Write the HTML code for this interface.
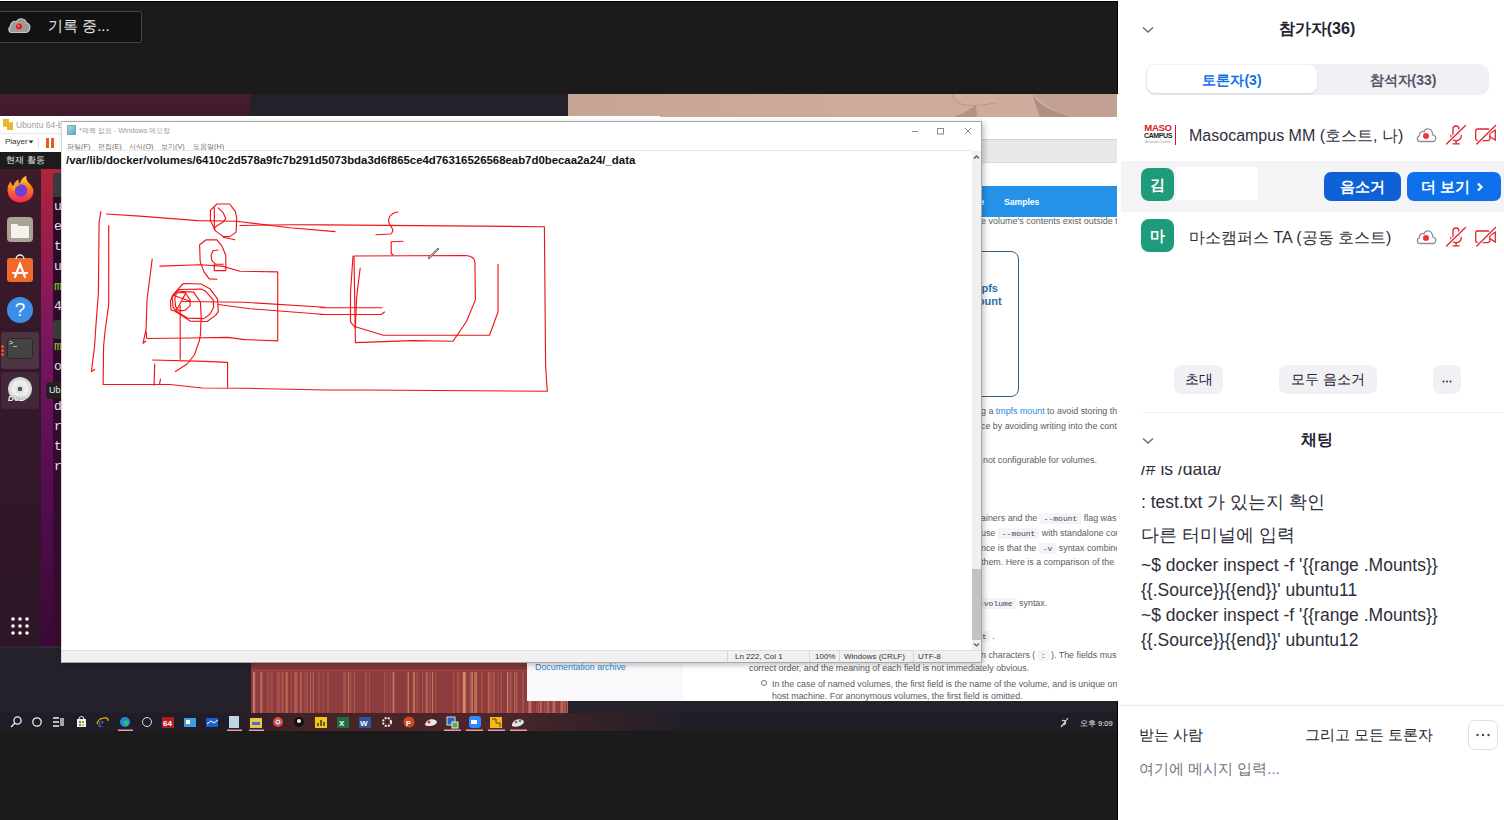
<!DOCTYPE html>
<html><head><meta charset="utf-8">
<style>
*{margin:0;padding:0;box-sizing:border-box}
html,body{width:1504px;height:820px;overflow:hidden;background:#fff;font-family:"Liberation Sans",sans-serif;position:relative}
.a{position:absolute}
#video{left:0;top:0;width:1117px;height:820px;background:#1b1b1b;overflow:hidden}
#panel{left:1118px;top:0;width:386px;height:820px;background:#fff;overflow:hidden}
</style></head><body>
<div id="video" class="a">
  <!-- ubuntu wallpaper top strip -->
  <div class="a" style="left:0;top:94px;width:250px;height:22px;background:linear-gradient(180deg,#461f30,#3f1a2c)"></div>
  <div class="a" style="left:250px;top:94px;width:318px;height:22px;background:#24212b"></div>
  <!-- face photo -->
  <svg class="a" style="left:568px;top:94px" width="549" height="23" viewBox="568 94 549 23">
    <defs><linearGradient id="fg" x1="0" x2="1"><stop offset="0" stop-color="#c7a595"/><stop offset=".5" stop-color="#cdab9b"/><stop offset="1" stop-color="#cfad9e"/></linearGradient></defs>
    <rect x="568" y="94" width="549" height="23" fill="url(#fg)"/>
    <path d="M1033,94 L1117,94 L1117,117 L1072,117 C1060,112 1045,108 1040,100 Z" fill="#c2a192"/>
    <path d="M1033,94 C1036,103 1048,110 1072,117 L1040,117 C1037,110 1034,100 1033,94 Z" fill="#af8f82"/>
    <path d="M976,104 C970,110 962,114 953,117 L977,117 Z" fill="#b39284"/>
    <path d="M953,94 C953,100 958,104 966,105 C975,106 985,105 995,103 L995,94 Z" fill="#d2ae9c"/>
    <path d="M953,94 C953,100 958,104 966,105 C975,106 985,105 995,103" fill="none" stroke="#b99787" stroke-width="1"/>
  </svg>
  <!-- navy desktop bottom -->
  <div class="a" style="left:0;top:647px;width:1117px;height:84px;background:#24212b"></div>
  <!-- curtain -->
  <svg class="a" style="left:251px;top:660px" width="317" height="53" viewBox="0 0 317 53"><rect width="317" height="53" fill="#8e3d3f"/><rect x="2.0" y="12" width="2.2" height="41" fill="#d07a66" opacity="0.87"/><rect x="9.2" y="12" width="2.2" height="41" fill="#d98a6a" opacity="0.53"/><rect x="16.4" y="12" width="1" height="41" fill="#c8705a" opacity="0.65"/><rect x="18.9" y="12" width="3" height="41" fill="#b45550" opacity="0.47"/><rect x="25.9" y="12" width="3" height="41" fill="#b45550" opacity="0.73"/><rect x="30.4" y="12" width="2.2" height="41" fill="#c8705a" opacity="0.48"/><rect x="34.6" y="12" width="2.2" height="41" fill="#c8705a" opacity="0.80"/><rect x="39.8" y="12" width="1" height="41" fill="#c06558" opacity="0.56"/><rect x="43.3" y="12" width="3" height="41" fill="#c8705a" opacity="0.66"/><rect x="48.8" y="12" width="2.2" height="41" fill="#d07a66" opacity="0.49"/><rect x="53.5" y="12" width="1" height="41" fill="#c06558" opacity="0.58"/><rect x="55.7" y="12" width="0.8" height="41" fill="#e0956e" opacity="0.50"/><rect x="59.0" y="12" width="0.8" height="41" fill="#d07a66" opacity="0.76"/><rect x="61.8" y="12" width="0.8" height="41" fill="#e0956e" opacity="0.62"/><rect x="66.6" y="12" width="2.2" height="41" fill="#b45550" opacity="0.54"/><rect x="71.3" y="12" width="1.3" height="41" fill="#b85a50" opacity="0.46"/><rect x="76.6" y="12" width="0.8" height="41" fill="#d98a6a" opacity="0.56"/><rect x="92.2" y="12" width="3" height="41" fill="#c06558" opacity="0.53"/><rect x="97.2" y="12" width="1" height="41" fill="#e0956e" opacity="0.74"/><rect x="99.4" y="12" width="1" height="41" fill="#c8705a" opacity="0.57"/><rect x="102.9" y="12" width="0.8" height="41" fill="#d98a6a" opacity="0.53"/><rect x="114.6" y="12" width="0.8" height="41" fill="#d07a66" opacity="0.72"/><rect x="117.9" y="12" width="0.8" height="41" fill="#c8705a" opacity="0.54"/><rect x="133.2" y="12" width="1" height="41" fill="#c06558" opacity="0.67"/><rect x="135.7" y="12" width="1" height="41" fill="#b45550" opacity="0.52"/><rect x="138.7" y="12" width="1" height="41" fill="#b45550" opacity="0.54"/><rect x="141.7" y="12" width="1.6" height="41" fill="#e0956e" opacity="0.72"/><rect x="156.6" y="12" width="1.3" height="41" fill="#d98a6a" opacity="0.78"/><rect x="161.9" y="12" width="2.2" height="41" fill="#e0956e" opacity="0.58"/><rect x="165.6" y="12" width="0.8" height="41" fill="#d98a6a" opacity="0.55"/><rect x="167.6" y="12" width="1" height="41" fill="#b45550" opacity="0.46"/><rect x="171.1" y="12" width="1" height="41" fill="#c8705a" opacity="0.47"/><rect x="174.6" y="12" width="2.2" height="41" fill="#d98a6a" opacity="0.49"/><rect x="178.3" y="12" width="1.3" height="41" fill="#b45550" opacity="0.78"/><rect x="181.1" y="12" width="0.8" height="41" fill="#e0956e" opacity="0.86"/><rect x="184.4" y="12" width="0.8" height="41" fill="#c06558" opacity="0.74"/><rect x="201.9" y="12" width="0.8" height="41" fill="#c8705a" opacity="0.65"/><rect x="205.7" y="12" width="3" height="41" fill="#b45550" opacity="0.77"/><rect x="211.7" y="12" width="3" height="41" fill="#e0956e" opacity="0.86"/><rect x="218.7" y="12" width="0.8" height="41" fill="#d07a66" opacity="0.67"/><rect x="220.3" y="12" width="1.6" height="41" fill="#e0956e" opacity="0.71"/><rect x="223.1" y="12" width="3" height="41" fill="#c8705a" opacity="0.90"/><rect x="230.1" y="12" width="1.6" height="41" fill="#b45550" opacity="0.76"/><rect x="236.7" y="12" width="2.2" height="41" fill="#c8705a" opacity="0.68"/><rect x="239.7" y="12" width="0.8" height="41" fill="#e0956e" opacity="0.46"/><rect x="241.7" y="12" width="2.2" height="41" fill="#b45550" opacity="0.86"/><rect x="246.4" y="12" width="1.3" height="41" fill="#b85a50" opacity="0.51"/><rect x="249.7" y="12" width="1.3" height="41" fill="#b45550" opacity="0.87"/><rect x="256.0" y="12" width="1.3" height="41" fill="#e0956e" opacity="0.75"/><rect x="259.3" y="12" width="1" height="41" fill="#d98a6a" opacity="0.62"/><rect x="263.3" y="12" width="1" height="41" fill="#e0956e" opacity="0.61"/><rect x="265.1" y="12" width="1.3" height="41" fill="#d07a66" opacity="0.53"/><rect x="271.4" y="12" width="1" height="41" fill="#d07a66" opacity="0.64"/><rect x="277.4" y="12" width="3" height="41" fill="#d07a66" opacity="0.83"/><rect x="285.4" y="12" width="0.8" height="41" fill="#b85a50" opacity="0.84"/><rect x="287.0" y="12" width="1.3" height="41" fill="#c06558" opacity="0.61"/><rect x="289.1" y="12" width="1.6" height="41" fill="#e0956e" opacity="0.54"/><rect x="293.2" y="12" width="1" height="41" fill="#d07a66" opacity="0.47"/><rect x="295.4" y="12" width="3" height="41" fill="#c06558" opacity="0.74"/><rect x="301.4" y="12" width="3" height="41" fill="#d98a6a" opacity="0.54"/><rect x="309.4" y="12" width="3" height="41" fill="#c8705a" opacity="0.79"/><rect x="313.2" y="12" width="1.3" height="41" fill="#d07a66" opacity="0.61"/><rect x="316.0" y="12" width="3" height="41" fill="#d98a6a" opacity="0.49"/><rect x="0" y="0" width="317" height="12" fill="#85383a"/><rect x="0" y="10" width="317" height="1.5" fill="#a85048" opacity=".7"/></svg>
  
  <!-- docs browser -->
  <div class="a" style="left:527px;top:117px;width:590px;height:584px;background:#fff;overflow:hidden">
    <div class="a" style="left:0;top:22px;width:590px;height:24px;background:#e9e7ea;border-top:1px solid #d0cfd2;border-bottom:1px solid #dcdcdc"></div>
    <div class="a" style="left:0;top:69px;width:590px;height:31px;background:#2592e8"></div>
    <div class="a" style="left:477px;top:79px;color:#fff;font-size:8.6px;font-weight:bold;line-height:12px">Samples</div>
    <div class="a" style="left:452px;top:79px;color:#fff;font-size:9.5px;font-weight:bold;line-height:12px">e</div>
    <div class="a" style="left:0;top:500px;width:156px;height:84px;background:#f9f9fb"></div>
  </div>
  <!-- docs content visible -->
  <div class="a" style="left:981px;top:214px;color:#606060;font-size:9px;line-height:14px;white-space:nowrap">e volume's contents exist outside th</div>
  <div class="a" style="left:940px;top:251px;width:79px;height:146px;border:1.5px solid #2f5f86;border-radius:8px"></div>
  <div class="a" style="left:968px;top:282px;color:#2d6fa5;font-size:11px;font-weight:bold;line-height:13px">tmpfs<br>mount</div>
  <div class="a" style="left:981px;top:404px;color:#5c5c5c;font-size:8.9px;line-height:14px;white-space:nowrap">g a <span style="color:#2a8ad4">tmpfs mount</span> to avoid storing th</div>
  <div class="a" style="left:981px;top:419px;color:#5c5c5c;font-size:8.9px;line-height:14px;white-space:nowrap">ce by avoiding writing into the conta</div>
  <div class="a" style="left:983px;top:453px;color:#5c5c5c;font-size:8.9px;line-height:14px;white-space:nowrap">not configurable for volumes.</div>
  <div class="a" style="left:981px;top:511px;color:#5c5c5c;font-size:8.9px;line-height:14px;white-space:nowrap">ainers and the <span style="background:#f3f4f8;color:#445;font-family:'Liberation Mono',monospace;font-size:8px;padding:1px 4px">--mount</span> flag was u</div>
  <div class="a" style="left:981px;top:526px;color:#5c5c5c;font-size:8.9px;line-height:14px;white-space:nowrap">use <span style="background:#f3f4f8;color:#445;font-family:'Liberation Mono',monospace;font-size:8px;padding:1px 4px">--mount</span> with standalone cont</div>
  <div class="a" style="left:981px;top:541px;color:#5c5c5c;font-size:8.9px;line-height:14px;white-space:nowrap">nce is that the <span style="background:#f3f4f8;color:#445;font-family:'Liberation Mono',monospace;font-size:8px;padding:1px 4px">-v</span> syntax combine</div>
  <div class="a" style="left:981px;top:555px;color:#5c5c5c;font-size:8.9px;line-height:14px;white-space:nowrap">them. Here is a comparison of the s</div>
  <div class="a" style="left:975px;top:596px;color:#5c5c5c;font-size:8.9px;line-height:14px;white-space:nowrap"><span style="background:#f3f4f8;color:#445;font-family:'Liberation Mono',monospace;font-size:8px;padding:1px 4px">-volume</span> syntax.</div>
  <div class="a" style="left:979px;top:629px;color:#5c5c5c;font-size:8.9px;line-height:14px;white-space:nowrap"><span style="background:#f3f4f8;color:#445;font-family:'Liberation Mono',monospace;font-size:8px;padding:1px 3px">t</span> .</div>
  <div class="a" style="left:981px;top:648px;color:#5c5c5c;font-size:8.9px;line-height:14px;white-space:nowrap">n characters ( <span style="background:#f3f4f8;color:#445;font-family:'Liberation Mono',monospace;font-size:8px;padding:1px 3px">:</span> ). The fields must l</div>
  <div class="a" style="left:749px;top:661px;color:#5c5c5c;font-size:8.9px;line-height:14px;white-space:nowrap">correct order, and the meaning of each field is not immediately obvious.</div>
  <div class="a" style="left:761px;top:680px;width:6px;height:6px;border:1px solid #777;border-radius:50%"></div>
  <div class="a" style="left:772px;top:677px;color:#5c5c5c;font-size:8.9px;line-height:14px;white-space:nowrap">In the case of named volumes, the first field is the name of the volume, and is unique on a</div>
  <div class="a" style="left:772px;top:689px;color:#5c5c5c;font-size:8.9px;line-height:14px;white-space:nowrap">host machine. For anonymous volumes, the first field is omitted.</div>
  <div class="a" style="left:535px;top:660px;color:#2a8ad4;font-size:8.9px;line-height:14px;white-space:nowrap">Documentation archive</div>
  <!-- vmware -->
  <div class="a" style="left:0;top:116px;width:660px;height:532px;background:#fff;overflow:hidden">
    <div class="a" style="left:3px;top:3px;width:10px;height:11px;background:#e8b82a;clip-path:polygon(0 0,60% 0,60% 30%,100% 30%,100% 100%,40% 100%,40% 70%,0 70%)"></div>
    <div class="a" style="left:16px;top:3px;color:#a0a0a0;font-size:8.5px;line-height:12px">Ubuntu 64-bit</div>
    <div class="a" style="left:0;top:17px;width:660px;height:1px;background:#ececec"></div>
    <div class="a" style="left:5px;top:20px;color:#333;font-size:8px;line-height:12px">Player</div><svg class="a" style="left:28px;top:24px" width="6" height="4" viewBox="0 0 6 4"><path d="M0.5,0.5 h5 l-2.5,3 z" fill="#333"/></svg>
    <div class="a" style="left:38px;top:21px;width:1px;height:11px;background:#ddd"></div>
    <div class="a" style="left:46px;top:22px;width:3px;height:10px;background:#e85d1a"></div>
    <div class="a" style="left:51px;top:22px;width:3px;height:10px;background:#e85d1a"></div>
    <!-- ubuntu -->
    <div class="a" style="left:0;top:36px;width:660px;height:17px;background:#1d1d1d"></div>
    <div class="a" style="left:6px;top:38px;color:#e8e8e8;font-size:9px;line-height:12px">현재 활동</div>
    <div class="a" style="left:0;top:53px;width:41px;height:479px;background:linear-gradient(180deg,#3d1b2b,#341829 40%,#2d1726)"></div>
    <div class="a" style="left:41px;top:53px;width:30px;height:479px;background:linear-gradient(180deg,#b02539,#9a1d4c 15%,#7a1660 35%,#5a0e55 60%,#3a0838)"></div>
    <div class="a" style="left:53px;top:57px;width:12px;height:475px;background:linear-gradient(180deg,#2e0b27,#380c30);border-radius:4px 0 0 0"></div>
    <div class="a" style="left:53px;top:57px;width:12px;height:24px;background:#3b3b3b;border-radius:4px 0 0 0"></div>
    <!-- dock icons (coords relative to vmware: top offset 116) -->
    <!-- firefox -->
    <svg class="a" style="left:6px;top:59px" width="29" height="29" viewBox="0 0 29 29">
      <defs><linearGradient id="ffg" x1="0" y1="0" x2="0" y2="1"><stop offset="0" stop-color="#ffd43a"/><stop offset=".45" stop-color="#ff7b1f"/><stop offset="1" stop-color="#f5225a"/></linearGradient></defs>
      <path d="M14.5,27.5 C7,27.5 1.5,22 1.5,15 C1.5,11 3,8 5,6.5 C5,9 6.5,10.5 7.5,11 C8,7.5 10.5,5 13,4.5 C12,6.5 12.5,8 14,8.5 C15,4 18,1.5 20.5,1 C19.5,3.5 21,6 23,8 C26,11 27.5,13.5 27.5,16 C27.5,22.5 22,27.5 14.5,27.5 Z" fill="url(#ffg)"/>
      <circle cx="15" cy="15.5" r="6.3" fill="#6f3fd8"/>
      <path d="M5,13 C7,10 11,9 14,10.5 C10,11 8.5,13.5 9,16 C6.5,15.5 5.5,14.5 5,13 Z" fill="#ff9a2a"/>
    </svg>
    
    <!-- files -->
    <div class="a" style="left:7px;top:101px;width:26px;height:25px;border-radius:4px;background:#a9a295"></div>
    <svg class="a" style="left:7px;top:101px" width="26" height="25" viewBox="0 0 26 25"><path d="M4,7 h6 l2,2 h10 v12 h-18 z" fill="#f4f2ee"/></svg>
    <!-- software -->
    <div class="a" style="left:7px;top:142px;width:26px;height:24px;border-radius:3px;background:#ef6a2a"></div>
    <svg class="a" style="left:7px;top:138px" width="26" height="28" viewBox="0 0 26 28"><path d="M9,5 a4,4 0 0 1 8,0" stroke="#eee" stroke-width="1.3" fill="none"/><g stroke="#fff" stroke-width="2.2" fill="none" stroke-linecap="round"><path d="M8,23 L13,10 L18,23"/><path d="M6,19 h14"/></g></svg>
    <!-- help -->
    <div class="a" style="left:7px;top:181px;width:26px;height:26px;border-radius:50%;background:#3a8ee6;color:#fff;font-size:19px;text-align:center;line-height:26px">?</div>
    <!-- terminal selected -->
    <div class="a" style="left:1px;top:216px;width:38px;height:37px;border-radius:3px;background:rgba(255,255,255,.12)"></div>
    <div class="a" style="left:7px;top:222px;width:26px;height:21px;border-radius:3px;background:#444;border:1px solid #2a2a2a"></div>
    <div class="a" style="left:9px;top:222px;color:#fff;font-size:7px;line-height:10px">&gt;_</div>
    <div class="a" style="left:1px;top:229px;width:3px;height:3px;border-radius:50%;background:#e95420;box-shadow:0 4px 0 #e95420,0 8px 0 #e95420"></div>
    <!-- dvd -->
    <div class="a" style="left:1px;top:256px;width:38px;height:37px;border-radius:3px;background:rgba(255,255,255,.07)"></div>
    <div class="a" style="left:8px;top:261px;width:24px;height:24px;border-radius:50%;background:radial-gradient(circle,#555 0,#555 12%,#ddd 14%,#f2f2f2 40%,#cfcfcf 70%,#eee)"></div>
    <div class="a" style="left:8px;top:278px;color:#fff;font-size:8px;font-style:italic;font-weight:bold;line-height:9px;text-shadow:0 0 1px #333">DVD</div>
    <!-- grid -->
    <svg class="a" style="left:11px;top:501px" width="18" height="18" viewBox="0 0 18 18" fill="#fff"><circle cx="2" cy="2" r="1.8"/><circle cx="9" cy="2" r="1.8"/><circle cx="16" cy="2" r="1.8"/><circle cx="2" cy="9" r="1.8"/><circle cx="9" cy="9" r="1.8"/><circle cx="16" cy="9" r="1.8"/><circle cx="2" cy="16" r="1.8"/><circle cx="9" cy="16" r="1.8"/><circle cx="16" cy="16" r="1.8"/></svg>
    <div class="a" style="left:0;top:530px;width:660px;height:2px;background:#2e2a33"></div>
    <!-- terminal text -->
    <div class="a" style="left:54px;top:81px;color:#e6e0ea;font-family:'Liberation Mono',monospace;font-size:13px;line-height:20px;white-space:pre">u
e
t
u
<span style="color:#7ec81c">m</span>
4
 
<span style="color:#7ec81c">m</span>
o
 
d
r
t
r</div>
    <div class="a" style="left:53px;top:204px;width:12px;height:19px;background:#3a3a3a;border-radius:3px"></div>
    <div class="a" style="left:53px;top:244px;width:12px;height:2px;background:#2e0b27"></div>
    <div class="a" style="left:46px;top:266px;width:20px;height:17px;background:#222;border-radius:4px;color:#eee;font-size:9px;line-height:17px;padding-left:3px">Ub</div>
  </div>
  <!-- notepad -->
  <div class="a" id="np" style="left:61px;top:121px;width:921px;height:542px;background:#fff;border:1px solid #a8a8a8;border-left-color:#d8d8d8;box-shadow:2px 2px 6px rgba(0,0,0,.25);overflow:hidden">
    <div class="a" style="left:5px;top:3px;width:9px;height:10px;background:linear-gradient(135deg,#a9d7e8,#5fa9c8);border:1px solid #7aa"></div>
    <div class="a" style="left:17px;top:3px;color:#9a9a9a;font-size:7.2px;line-height:12px;white-space:nowrap">*제목 없음 - Windows 메모장</div>
    <svg class="a" style="left:845px;top:3px" width="70" height="12" viewBox="0 0 70 12"><g stroke="#8a8a8a" stroke-width="1" fill="none"><path d="M5,6.5 h6"/><rect x="30.5" y="3.5" width="6" height="5.5"/><path d="M58,3 l6,6 M64,3 l-6,6"/></g></svg>
    
    
    <div class="a" style="left:5px;top:19px;color:#6a6a6a;font-size:7.3px;line-height:11px;white-space:pre">파일(F)</div><div class="a" style="left:36px;top:19px;color:#6a6a6a;font-size:7.3px;line-height:11px;white-space:pre">편집(E)</div><div class="a" style="left:67px;top:19px;color:#6a6a6a;font-size:7.3px;line-height:11px;white-space:pre">서식(O)</div><div class="a" style="left:99px;top:19px;color:#6a6a6a;font-size:7.3px;line-height:11px;white-space:pre">보기(V)</div><div class="a" style="left:131px;top:19px;color:#6a6a6a;font-size:7.3px;line-height:11px;white-space:pre">도움말(H)</div>
    <div class="a" style="left:4px;top:28px;width:906px;height:1px;background:#e8e8e8"></div>
    <div class="a" id="path" style="left:4px;top:30px;color:#111;font-size:11.4px;font-weight:bold;line-height:16px;white-space:pre">/var/lib/docker/volumes/6410c2d578a9fc7b291d5073bda3d6f865ce4d76316526568eab7d0becaa2a24/_data</div>
    <!-- scrollbar -->
    <div class="a" style="left:910px;top:29px;width:9px;height:499px;background:#f0f0f0"></div>
    <div class="a" style="left:910px;top:447px;width:9px;height:71px;background:#c2c2c2"></div>
    <svg class="a" style="left:910px;top:31px" width="9" height="8" viewBox="0 0 9 8"><path d="M2,5.5 L4.5,3 L7,5.5" stroke="#555" stroke-width="1.4" fill="none"/></svg>
    <svg class="a" style="left:910px;top:519px" width="9" height="8" viewBox="0 0 9 8"><path d="M2,2.5 L4.5,5 L7,2.5" stroke="#555" stroke-width="1.2" fill="none"/></svg>
    <!-- status -->
    <div class="a" style="left:0;top:528px;width:921px;height:12px;background:#f0f0f0;border-top:1px solid #dedede"></div>
    <div class="a" style="left:665px;top:529px;width:1px;height:11px;background:#d8d8d8"></div>
    <div class="a" style="left:747px;top:529px;width:1px;height:11px;background:#d8d8d8"></div>
    <div class="a" style="left:777px;top:529px;width:1px;height:11px;background:#d8d8d8"></div>
    <div class="a" style="left:851px;top:529px;width:1px;height:11px;background:#d8d8d8"></div>
    <div class="a" style="left:673px;top:530px;color:#333;font-size:8px;line-height:10px">Ln 222, Col 1</div>
    <div class="a" style="left:753px;top:530px;color:#333;font-size:8px;line-height:10px">100%</div>
    <div class="a" style="left:782px;top:530px;color:#333;font-size:8px;line-height:10px">Windows (CRLF)</div>
    <div class="a" style="left:856px;top:530px;color:#333;font-size:8px;line-height:10px">UTF-8</div>
  </div>
<svg class="a" style="left:0;top:0" width="1117" height="820" viewBox="0 0 1117 820" fill="none" stroke="#f01414" stroke-width="1.15" stroke-linecap="round" stroke-linejoin="round">
<path d="M100.9,211.6 L99.1,221.8 L98.4,292.6 L95.6,330 L94.6,346 L91.4,371.5 L94.6,369.4"/>
<path d="M106.5,214 L140,216.1 L197.6,220.6 L236.1,221.3 L290,227.7 L335,231.6"/>
<path d="M239.9,225.5 L290,224.7 L325,224.8 L544.4,226.7 L545.6,365.7 L547.3,391.3 L364,390 L325,390 L245,388.3 L202,388 L170.1,384.5 L103.1,384.5 L103.6,346 L105.2,330 L108.7,304.8 L108.7,225.5"/>
<path d="M398,212 C390,213 387,219 389.5,224 C392,228 395,231 390.7,234 L376,234.8"/>
<path d="M403,241.3 L391.2,241.8 L391.2,253.5 L393,254.8"/>
<path d="M354,256 L466,255.5 C472,256 475,259 474.9,262 L475.4,299.9 L466.3,321.8 L453,341.3 L412.7,340.6 L355.4,342.6 L354,256"/>
<path d="M360.2,268 L356.6,297.4 L355.4,326.7 L383.4,335.2 L489.5,335.2 L498,312 L498,264.5"/>
<path d="M353,256 L350.5,292.6 L350.5,321.8 L355.4,328"/>
<path d="M320,307.7 L382.2,307.7"/>
<path d="M320,314.5 L381,314.5 L384.6,312"/>
<!-- top O with D -->
<path d="M216.9,204 L229.7,204 L235.4,211.6 L236.7,218 L236.1,232.1 L229.7,236.6 L223.3,236.6 L215.6,230.9 L210.4,220.6 L210.4,210.4 Z"/>
<path d="M223.3,237.3 L234.8,239.8"/>
<path d="M214.3,207.8 L214.3,229.6"/>
<path d="M218.1,207.8 L223.3,212.9 L225.8,218.7 L223.3,221.9 L216.9,225.7 L214.3,228.3"/>
<!-- C shape -->
<path d="M216.9,279.3 L209.2,278.9 L204,271.9 L200.2,261.6 L199.6,245 L206,239.8 L216.9,239.8 L222,246.2 L225.8,255.2 L225.8,270.6 L214.3,270.6 L214.3,264.2"/>
<path d="M218.1,250 L213,250.7 L211.1,255.2 L211.7,260.3 L215.6,264.2 L223.3,264.2"/>
<!-- middle rect -->
<path d="M152.2,259 L147,300 L146,330 L143,343.3 L145.6,341.2"/>
<path d="M159.9,266.1 L200.2,264.8 L222,266.1 L239.9,271.2 L277.7,271.9 L277.7,340.9 L245,339.6 L227.6,337.4 L190.3,338 L146.7,338.5 L146.2,332.1"/>
<!-- big circle -->
<path d="M183.3,283.5 L201.2,284 L209.8,288.7 L217.5,298.9 L218.3,311.7 L215.8,315.1 L207.2,321.5 L190.1,321.1 L174.8,310.9 L171,310 L170.5,300.6 L173.1,294.6 Z"/>
<path d="M179,289.5 L201.2,289.1 L205.5,291.2 L213.2,299.8 L213.6,307.5 L209.8,314.3 L203.8,318.6 L187.6,318.1 L178.2,312.6 L173.1,307.5 L172.2,297.2 Z"/>
<path d="M176.5,292.9 L185,292.5 L190.1,299.8 L190.1,305.7 L185,310.4 L179,310.9 L175.6,306.6 L174.8,298.9 Z"/>
<path d="M173.9,295.5 L191,301.5"/>
<path d="M175.6,311.7 L185.9,292.9"/>
<path d="M179,291.2 L193.6,292.1 L200.4,302.3 L201.2,317.7 L200.4,334.8 L199.4,340.6 L194.6,354.5 L187.1,364 L175.4,371.5"/>
<path d="M182.5,301.5 L243.9,302.3 L325,307.2"/>
<path d="M218.3,304.5 L250,308.7 L325,314.5"/>
<path d="M180.2,305.7 L180.2,359.3"/>
<!-- small rect -->
<path d="M152.6,360 L205.2,361.4 L227.6,362.4 L227.6,387.4"/>
<path d="M154.7,364 L154.1,385.3"/>
<path d="M160.5,379 L159.5,384.3"/>
<path d="M429,258 L438,249" stroke="#666" stroke-width="2.2"/>
<path d="M429.5,257.5 L437.5,249.5" stroke="#ddd" stroke-width="0.8"/>
</svg>
  <!-- taskbar -->
  <div class="a" style="left:0;top:713px;width:1117px;height:18px;background:linear-gradient(90deg,#201d26 0,#211d26 230px,#452326 300px,#4d2628 500px,#3a2228 570px,#221e27 680px,#201d26)"></div>
  <!-- taskbar icons -->
  <svg class="a" style="left:0;top:713px" width="1117" height="18" viewBox="0 0 1117 18">
    <g fill="none" stroke="#eee" stroke-width="1.3">
      <circle cx="17.5" cy="7.5" r="3.6"/><path d="M15,10 L11,14"/>
      <circle cx="37" cy="9" r="4.2"/>
      <path d="M53,5 h6 M53,9 h6 M53,13 h6 M61,5 v8 M63,5 v8"/>
    </g>
    <rect x="77" y="6" width="9" height="8" fill="#f2f2f2"/><path d="M79,6 a2.5,2.5 0 0 1 5,0" stroke="#f2f2f2" fill="none"/><rect x="79" y="8" width="2" height="2" fill="#f25022"/><rect x="82" y="8" width="2" height="2" fill="#7fba00"/><rect x="79" y="11" width="2" height="2" fill="#00a4ef"/><rect x="82" y="11" width="2" height="2" fill="#ffb900"/>
    <text x="98" y="14" font-family="Liberation Serif" font-style="italic" font-size="13" fill="#3a7bd5">e</text><path d="M97,11 C98,4 110,3 108,8" stroke="#f4b400" fill="none" stroke-width="1.2"/>
    <circle cx="125" cy="9" r="5" fill="#1e8bd6"/><circle cx="126" cy="10" r="2.5" fill="#2fc06e"/>
    <circle cx="147" cy="9" r="4.5" fill="none" stroke="#ddd" stroke-width="1"/>
    <rect x="162" y="4" width="12" height="11" fill="#b01e1e"/><text x="163" y="13" font-size="8" font-weight="bold" fill="#fff" font-family="Liberation Sans">64</text>
    <rect x="184" y="5" width="12" height="9" fill="#3aa0e0"/><rect x="186" y="7" width="4" height="4" fill="#fff"/>
    <rect x="206" y="5" width="12" height="9" fill="#1a5fd0"/><path d="M207,11 l4,-3 3,2 4,-3" stroke="#fff" fill="none"/>
    <rect x="229" y="3" width="10" height="12" fill="#bcd6e6"/>
    <rect x="250" y="5" width="12" height="10" fill="#f2c24a"/><rect x="252" y="9" width="8" height="3" fill="#2b7bd6"/>
    <circle cx="278" cy="9" r="5" fill="#dd4b39"/><circle cx="278" cy="9" r="2" fill="#4285f4" stroke="#fff"/>
    <circle cx="299" cy="9" r="5" fill="#111"/><circle cx="299" cy="8" r="2" fill="#eee"/>
    <rect x="315" y="4" width="12" height="11" fill="#f2c811"/><path d="M318,13 v-3 M321,13 v-6 M324,13 v-4" stroke="#333" stroke-width="1.5"/>
    <rect x="337" y="4" width="12" height="11" fill="#1d6f42"/><text x="339" y="13" font-size="8" font-weight="bold" fill="#fff" font-family="Liberation Sans">X</text>
    <rect x="359" y="4" width="12" height="11" fill="#2b579a"/><text x="360" y="13" font-size="8" font-weight="bold" fill="#fff" font-family="Liberation Sans">W</text>
    <circle cx="387" cy="9" r="4" fill="none" stroke="#eee" stroke-width="2" stroke-dasharray="2 1.2"/>
    <circle cx="409" cy="9" r="5.5" fill="#d24726"/><text x="406" y="13" font-size="7" font-weight="bold" fill="#fff" font-family="Liberation Sans">P</text>
    <path d="M425,12 C426,5 436,5 437,9 C436,13 428,14 425,12" fill="#e8e8e8"/><circle cx="429" cy="9" r="1.5" fill="#d33"/>
    <rect x="447" y="4" width="8" height="8" fill="#2a62c9" stroke="#ddd"/><rect x="452" y="9" width="6" height="6" fill="#4caf50" stroke="#eee"/>
    <rect x="469" y="3" width="12" height="12" rx="3" fill="#2d8cff"/><rect x="471" y="7" width="6" height="4" fill="#fff"/>
    <rect x="490" y="4" width="12" height="11" fill="#f3b71b"/><path d="M492,6 h4 v4 h4 v4" stroke="#5a4a00" fill="none"/>
    <path d="M512,13 C511,6 523,4 524,9 C523,13 515,15 512,13" fill="#dfe6ee"/><circle cx="516" cy="9" r="1.3" fill="#e33"/><circle cx="520" cy="8" r="1.3" fill="#3a3"/>
    <g fill="#e6a0a8"><rect x="118" y="16.5" width="15" height="1.5"/><rect x="227" y="16.5" width="15" height="1.5"/><rect x="249" y="16.5" width="15" height="1.5"/><rect x="444" y="16.5" width="17" height="1.5"/><rect x="466" y="16.5" width="17" height="1.5"/><rect x="488" y="16.5" width="17" height="1.5"/><rect x="510" y="16.5" width="17" height="1.5"/></g>
    <path d="M1061,14 l7,-9 M1062,8 c2,-2 5,1 3,3 c-2,2 -4,0 -3,3" stroke="#ddd" fill="none" stroke-width="1.1"/>
    <text x="1080" y="12.5" font-size="7.5" fill="#eee" font-family="Liberation Sans">오후 9:09</text>
  </svg>
  <!-- recording badge -->
  <div class="a" style="left:-2px;top:11px;width:144px;height:32px;background:#121212;border:1px solid #464646;border-radius:2px"></div>
  <svg class="a" style="left:7px;top:16px" width="24" height="18" viewBox="0 0 24 18"><path d="M5,16.5 C1.5,16.5 0.8,12 3.5,10.5 C3.2,6.5 7,4.5 9.5,6 C11,1.5 18,1.5 19.5,7 C22.5,7.5 23.5,10.5 22.5,13 C22,15.5 20.5,16.5 18.5,16.5 Z" fill="#9a9a9a" stroke="#c8c8c8" stroke-width="1.2"/><circle cx="12" cy="10.5" r="3" fill="#ee1b1b"/><circle cx="11.3" cy="9.7" r="1" fill="#ff8a8a"/></svg>
  <div class="a" style="left:48px;top:16px;color:#f0f0f0;font-size:15px;line-height:20px">기록 중...</div>
  <div class="a" style="left:0;top:1px;width:1117px;height:1px;background:#000"></div>
  <div class="a" style="left:0;top:0;width:1117px;height:1px;background:#fff"></div>
</div>
<div class="a" style="left:1117px;top:1px;width:1px;height:93px;background:#000"></div>
<div class="a" style="left:1117px;top:701px;width:1px;height:119px;background:#000"></div>
<div id="panel" class="a">
  <!-- header -->
  <svg class="a" style="left:24px;top:26px" width="12" height="8" viewBox="0 0 12 8"><path d="M1,1.5 L6,6 L11,1.5" fill="none" stroke="#6e6e80" stroke-width="1.6"/></svg>
  <div class="a" style="left:0;top:18px;width:398px;text-align:center;color:#232333;font-size:16px;font-weight:bold;line-height:22px">참가자(36)</div>
  <!-- tabs -->
  <div class="a" style="left:28px;top:64px;width:343px;height:31px;background:#f1f0f5;border-radius:9px"></div>
  <div class="a" style="left:29px;top:65px;width:170px;height:28px;background:#fff;border-radius:8px;box-shadow:0 1px 2px rgba(0,0,0,.12)"></div>
  <div class="a" style="left:29px;top:70px;width:170px;text-align:center;color:#0e71eb;font-size:14px;font-weight:bold;line-height:20px">토론자(3)</div>
  <div class="a" style="left:199px;top:70px;width:172px;text-align:center;color:#555566;font-size:14px;font-weight:bold;line-height:20px">참석자(33)</div>
  <!-- row1 -->
  <div class="a" style="left:23px;top:123px;width:34px;text-align:center;color:#d41920;font-size:9.5px;font-weight:bold;line-height:9px;letter-spacing:-.3px">MASO</div>
  <div class="a" style="left:23px;top:132px;width:34px;text-align:center;color:#222;font-size:7px;font-weight:bold;line-height:8px;letter-spacing:-.4px">CAMPUS</div>
  <div class="a" style="left:23px;top:140px;width:34px;text-align:center;color:#999;font-size:3px;line-height:4px">Actionable Content</div>
  <div class="a" style="left:57px;top:125px;width:1px;height:20px;background:#d41920"></div>
  <div class="a" id="n1" style="left:71px;top:126px;color:#2f2f3d;font-size:16px;line-height:20px;white-space:nowrap">Masocampus MM (호스트, 나)</div>
  <!-- icons row1 -->
  <svg class="a" style="left:0;top:0" width="386" height="260" viewBox="1118 0 386 260">
    <defs><g id="icr">
      <path d="M1420,141.5 C1417,141.5 1416.3,137 1419.3,135.8 C1419.3,132.3 1422,130.8 1424,131.8 C1425,128.2 1430.2,127.8 1431.8,131.3 C1432.6,132.6 1432.7,133.8 1432.6,134.9 C1435,135 1436.2,137.5 1435.6,139 C1435.4,140.6 1434.4,141.5 1433,141.5 Z" fill="none" stroke="#8f8f98" stroke-width="1.3"/>
      <circle cx="1426" cy="136" r="3" fill="#f0333f"/>
      <g stroke="#e0242f" stroke-width="1.3" fill="none" stroke-linecap="round">
        <path d="M1453,135 v-6 a3,3 0 0 1 6,0 v5"/>
        <path d="M1450.8,135.5 a5.3,5.3 0 0 0 10.6,0"/>
        <path d="M1456.1,141 v2.6 M1453,143.8 h6.2"/>
        <path d="M1446.5,144 L1465.5,125.5" stroke="#fff" stroke-width="3.2"/>
        <path d="M1446.5,144 L1465.5,125.5"/>
        <path d="M1477.5,129 h10.5 a1.8,1.8 0 0 1 1.8,1.8 v8 a1.8,1.8 0 0 1 -1.8,1.8 h-10.5 a1.8,1.8 0 0 1 -1.8,-1.8 v-8 a1.8,1.8 0 0 1 1.8,-1.8 z"/>
        <path d="M1490,133.5 l5.3,-3.3 v9.8 l-5.3,-3.3"/>
        <path d="M1476.8,144 L1495.5,125.5" stroke="#fff" stroke-width="3.2"/>
        <path d="M1476.8,144 L1495.5,125.5"/>
      </g>
    </g></defs>
    <use href="#icr"/>
    <use href="#icr" transform="translate(0,102)"/>
  </svg>
  <!-- row2 highlighted -->
  <div class="a" style="left:3px;top:161px;width:383px;height:51px;background:#f4f4f6"></div>
  <div class="a" style="left:23px;top:168px;width:33px;height:33px;background:#1d9b7b;border-radius:8px;color:#fff;font-size:15px;font-weight:bold;text-align:center;line-height:33px">김</div>
  <div class="a" style="left:58px;top:167px;width:82px;height:33px;background:#fff"></div>
  <div class="a" style="left:206px;top:172px;width:77px;height:29px;background:#0e62d6;border-radius:7px;color:#fff;font-size:15px;font-weight:bold;text-align:center;line-height:29px">음소거</div>
  <div class="a" style="left:289px;top:172px;width:94px;height:29px;background:#0e71eb;border-radius:7px;color:#fff;font-size:15px;font-weight:bold;line-height:29px;padding-left:14px;white-space:nowrap">더 보기 <svg style="position:relative;top:0px;margin-left:2px" width="8" height="10" viewBox="0 0 8 10"><path d="M2,1.5 L5.5,5 L2,8.5" stroke="#fff" stroke-width="2.2" fill="none"/></svg></div>
  <!-- row3 -->
  <div class="a" style="left:23px;top:219px;width:33px;height:33px;background:#1d9b7b;border-radius:8px;color:#fff;font-size:15px;font-weight:bold;text-align:center;line-height:33px">마</div>
  <div class="a" id="n3" style="left:71px;top:228px;color:#2f2f3d;font-size:16px;line-height:20px;white-space:nowrap">마소캠퍼스 TA (공동 호스트)</div>
  <!-- action buttons -->
  <div class="a" style="left:56px;top:365px;width:49px;height:29px;background:#f1f0f5;border-radius:8px;color:#232333;font-size:14px;text-align:center;line-height:29px">초대</div>
  <div class="a" style="left:161px;top:365px;width:98px;height:29px;background:#f1f0f5;border-radius:8px;color:#232333;font-size:14px;text-align:center;line-height:29px">모두 음소거</div>
  <div class="a" style="left:315px;top:365px;width:28px;height:29px;background:#f1f0f5;border-radius:8px"></div><svg class="a" style="left:315px;top:365px" width="28" height="29" viewBox="0 0 28 29" fill="#333"><circle cx="10.5" cy="16.5" r="1"/><circle cx="14" cy="16.5" r="1"/><circle cx="17.5" cy="16.5" r="1"/></svg>
  <div class="a" style="left:25px;top:412px;width:361px;height:1px;background:#ededf0"></div>
  <!-- chat header -->
  <svg class="a" style="left:24px;top:437px" width="12" height="8" viewBox="0 0 12 8"><path d="M1,1.5 L6,6 L11,1.5" fill="none" stroke="#6e6e80" stroke-width="1.6"/></svg>
  <div class="a" style="left:0;top:429px;width:398px;text-align:center;color:#232333;font-size:16px;font-weight:bold;line-height:22px">채팅</div>
  <!-- chat messages -->
  <div class="a" style="left:0;top:466px;width:386px;height:239px;overflow:hidden">
    <div class="a" id="chat" style="left:23px;top:-9px;color:#2e2e3a;font-size:17.5px;line-height:25px;white-space:nowrap">
      <div>/# ls /data/</div>
      <div style="margin-top:8px">: test.txt 가 있는지 확인</div>
      <div style="margin-top:8px">다른 터미널에 입력</div>
      <div style="margin-top:5px">~$ docker inspect -f '{{range .Mounts}}</div>
      <div>{{.Source}}{{end}}' ubuntu11</div>
      <div>~$ docker inspect -f '{{range .Mounts}}</div>
      <div>{{.Source}}{{end}}' ubuntu12</div>
    </div>
  </div>
  <div class="a" style="left:0;top:705px;width:386px;height:1px;background:#e8ebf0"></div>
  <div class="a" style="left:21px;top:725px;color:#232333;font-size:15px;line-height:20px">받는 사람</div>
  <div class="a" style="left:187px;top:725px;color:#232333;font-size:15px;line-height:20px">그리고 모든 토론자</div>
  <div class="a" style="left:350px;top:720px;width:30px;height:30px;border:1px solid #dedee6;border-radius:7px"></div><svg class="a" style="left:350px;top:720px" width="30" height="30" viewBox="0 0 30 30" fill="#444"><circle cx="9.5" cy="15" r="1.2"/><circle cx="15" cy="15" r="1.2"/><circle cx="20.5" cy="15" r="1.2"/></svg>
  <div class="a" style="left:21px;top:759px;color:#747487;font-size:15px;line-height:20px">여기에 메시지 입력...</div>
</div>
</body></html>
